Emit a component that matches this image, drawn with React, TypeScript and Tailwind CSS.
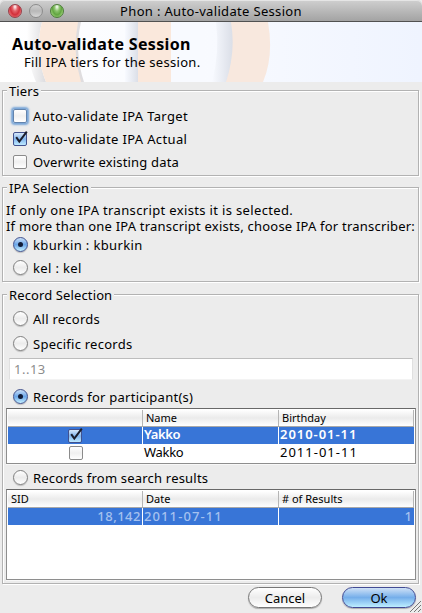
import type { ReactNode } from "react";

function Group({ title, className, children }: { title: string; className: string; children: ReactNode }) {
  return (
    <section
      className={`relative ml-[2px] w-[417px] border border-[#b2b2b2] shadow-[1px_1px_0_#fff,inset_1px_1px_0_#fff] ${className}`}
    >
      <h2 className="absolute -top-[8px] left-[4px] bg-[#ececec] px-[2px] text-[13px] leading-[16px] font-normal tracking-[0.12px]">{title}</h2>
      {children}
    </section>
  );
}

function Check({ checked = false, focused = false }: { checked?: boolean; focused?: boolean }) {
  return (
    <span
      className={`relative block size-[14px] shrink-0 rounded-[2px] border ${
        checked
          ? "border-[#42528e] bg-linear-to-b from-[#d7e8fa] via-[#82b5ed] to-[#bfeaff]"
          : "border-[#8b8b8b] bg-linear-to-b from-white via-[#f0f0f0] to-white"
      } ${focused ? "border-[#6384ad] shadow-[0_0_2px_2px_#79a6d8]" : ""}`}
    >
      {checked && (
        <svg className="absolute -top-[3px] -left-[1px]" width="16" height="16" viewBox="0 0 16 16">
          <path d="M3.2 7.2 L6.3 11.6 L13.8 1.6" fill="none" stroke="#1b1d2b" strokeWidth="2" />
        </svg>
      )}
    </span>
  );
}

function Radio({ checked = false }: { checked?: boolean }) {
  return (
    <span
      className={`flex size-[15px] shrink-0 items-center justify-center rounded-full border shadow-[0_1px_1px_#0003] ${
        checked
          ? "border-[#42528e] bg-linear-to-b from-[#c9dff7] via-[#6ba6e8] to-[#c5f0ff]"
          : "border-[#808080] bg-linear-to-b from-white via-[#ececec] to-white"
      }`}
    >
      {checked && <span className="size-[5px] rounded-full bg-[#111c38]" />}
    </span>
  );
}

function Option({ control, className, children }: { control: ReactNode; className: string; children: ReactNode }) {
  return (
    <label className={`flex items-center ${className}`}>
      <span className="flex w-[20px] shrink-0">{control}</span>
      <span>{children}</span>
    </label>
  );
}

function HeaderRow({ labels }: { labels: string[] }) {
  return (
    <div className="grid h-[17px] grid-cols-[135px_136px_135px] border-b border-[#a9a9a9] bg-linear-to-b from-white via-[#ebebeb] to-white text-[11px] leading-[15px]">
      {labels.map((label, i) => (
        <span key={i} className="border-r border-[#b5b5b5] pl-[3px]">{label}</span>
      ))}
    </div>
  );
}

export default function App() {
  return (
    <main className="flex h-[613px] w-[422px] flex-col overflow-hidden bg-[#ececec] font-['Noto_Sans','Open_Sans',sans-serif] text-[13px] leading-[16px] whitespace-nowrap text-black">
      <header className="relative flex h-[22px] shrink-0 items-center justify-center rounded-t-[5px] border-b border-[#515151] bg-linear-to-b from-[#d0d0d0] to-[#a3a3a3] shadow-[inset_0_1px_0_#e5e5e5]">
        <div className="absolute top-[4px] left-[8px] flex gap-[7px]">
          <i className="size-[14px] rounded-full border border-[#98404a] bg-[radial-gradient(ellipse_at_50%_15%,#fff_0%,#e4636a_30%,#d2303b_55%,#ff9a98_100%)]" />
          <i className="size-[14px] rounded-full border border-[#8c8c8c] bg-linear-to-b from-[#cfcfcf] via-[#b8b8b8] to-[#d8d8d8]" />
          <i className="size-[14px] rounded-full border border-[#4d7d3a] bg-[radial-gradient(ellipse_at_50%_15%,#fff_0%,#8cc46d_30%,#62a541_55%,#c8f5a0_100%)]" />
        </div>
        <h1 className="text-[13px] font-normal tracking-[0.33px]">Phon : Auto-validate Session</h1>
      </header>

      <div className="relative h-[60px] shrink-0 overflow-hidden bg-linear-to-r from-white via-[#f8faff] to-[#eff4ff]">
        <svg className="absolute inset-0" width="422" height="60" viewBox="0 0 422 60">
          <defs>
            <linearGradient id="shadeLeft">
              <stop offset="0" stopColor="#fff" />
              <stop offset="1" stopColor="#dcdcdf" />
            </linearGradient>
            <linearGradient id="shadeBar">
              <stop offset="0" stopColor="#f8faff" />
              <stop offset="1" stopColor="#d9dde6" />
            </linearGradient>
          </defs>
          <path d="M28 0H42Q34 30 46 60H36Q23 30 28 0Z" fill="url(#shadeLeft)" />
          <path d="M42 0H79Q72 30 82 60H46Q34 30 42 0Z" fill="#fae8db" />
          <path d="M78 0H81Q74 30 84 60H81Q72 30 78 0Z" fill="#dfdddf" />
          <path d="M125 0H139V60H125Z" fill="url(#shadeBar)" />
          <path d="M138 0H171V60H138Z" fill="#fae8dc" />
          <path d="M171 0H204V60H171Z" fill="#f8faff" />
          <path d="M216 0H233Q236 30 227 60H212Q220 30 216 0Z" fill="url(#shadeBar)" />
          <path d="M231 0H268Q274 34 263 60H226Q236 30 231 0Z" fill="#f8e8de" />
        </svg>
        <div className="relative pt-[12px]">
          <p className="pl-[12px] text-[16px] leading-[20px] font-bold tracking-[0.33px]">Auto-validate Session</p>
          <p className="pl-[24px] leading-[17px] tracking-[0.3px]">Fill IPA tiers for the session.</p>
        </div>
      </div>

      <Group title="Tiers" className="mt-[8px] h-[86px] pt-[13px] pl-[10px]">
        <Option className="h-[23px] tracking-[0.36px]" control={<Check focused />}>Auto-validate IPA Target</Option>
        <Option className="h-[23px] tracking-[0.36px]" control={<Check checked />}>Auto-validate IPA Actual</Option>
        <Option className="h-[23px] tracking-[0.17px]" control={<Check />}>Overwrite existing data</Option>
      </Group>

      <Group title="IPA Selection" className="mt-[11px] h-[95px] pt-[14px]">
        <p className="pl-[3px] tracking-[0.35px]">If only one IPA transcript exists it is selected.</p>
        <p className="pl-[3px] tracking-[0.21px]">If more than one IPA transcript exists, choose IPA for transcriber:</p>
        <Option className="-mt-px h-[23px] pl-[10px] tracking-[0.35px]" control={<Radio checked />}>kburkin : kburkin</Option>
        <Option className="h-[23px] pl-[10px] tracking-[0.35px]" control={<Radio />}>kel : kel</Option>
      </Group>

      <Group title="Record Selection" className="mt-[12px] h-[290px] pt-[11px] pl-[3px]">
        <Option className="h-[25px] pl-[7px] tracking-[0.25px]" control={<Radio />}>All records</Option>
        <Option className="h-[25px] pl-[7px] tracking-[0.25px]" control={<Radio />}>Specific records</Option>
        <div className="mt-[2px] ml-[3px] flex h-[22px] w-[404px] items-center border border-t-[#bdbdbd] border-r-[#e0e0e0] border-b-[#f3f3f3] border-l-[#e0e0e0] bg-white pl-[4px] tracking-[0.5px] text-[#8c8c8c]">
          1..13
        </div>
        <Option className="mt-[5px] h-[23px] pl-[7px] tracking-[0.25px]" control={<Radio checked />}>Records for participant(s)</Option>
        <div className="h-[56px] w-[410px] border border-[#8e8e8e] border-t-[#686868] bg-white px-px pt-px shadow-[0_1px_0_#f8f8f8]">
          <HeaderRow labels={["", "Name", "Birthday"]} />
          <div className="grid h-[17px] grid-cols-[135px_136px_135px] bg-[#3875d7] leading-[15px] font-semibold text-white">
            <span className="flex h-[17px] items-center justify-center border-r border-white"><Check checked /></span>
            <span className="h-[17px] border-r border-white pl-px tracking-[-0.4px]">Yakko</span>
            <span className="pl-px tracking-[0.95px]">2010-01-11</span>
          </div>
          <div className="grid h-[18px] grid-cols-[135px_136px_135px] leading-[17px]">
            <span className="flex items-center justify-center"><Check /></span>
            <span className="pl-px tracking-[-0.3px]">Wakko</span>
            <span className="pl-px tracking-[1px]">2011-01-11</span>
          </div>
        </div>
        <Option className="mt-[2px] h-[23px] pl-[7px] tracking-[0.2px]" control={<Radio />}>Records from search results</Option>
        <div className="h-[91px] w-[410px] border border-[#8e8e8e] border-t-[#686868] bg-white px-px pt-px shadow-[0_1px_0_#f8f8f8]">
          <HeaderRow labels={["SID", "Date", "# of Results"]} />
          <div className="grid h-[17px] grid-cols-[135px_136px_135px] bg-[#3875d7] leading-[16px] font-medium text-[#a5c1ef]">
            <span className="border-r border-white pr-px text-right tracking-[0.5px]">18,142</span>
            <span className="border-r border-white pl-px tracking-[1.1px]">2011-07-11</span>
            <span className="pr-[2px] text-right">1</span>
          </div>
        </div>
      </Group>

      <footer className="relative flex h-[29px] shrink-0 justify-end gap-[20px] pt-[3px] pr-[6px]">
        <button className="h-[21px] w-[74px] rounded-full border border-[#777] bg-linear-to-b from-white via-[#ececec] to-white leading-[18px] shadow-[0_1px_1px_#0004]">Cancel</button>
        <button className="h-[21px] w-[74px] rounded-full border border-[#424b94] bg-linear-to-b from-[#cfe1f6] via-[#75aeea] to-[#bdeeff] leading-[18px] shadow-[0_1px_1px_#0004]">Ok</button>
        <svg className="absolute right-[1px] bottom-[1px]" width="11" height="11" viewBox="0 0 11 11">
          <path d="M0 11 11 0M4 11 11 4M8 11 11 8" stroke="#777" strokeWidth="1" />
        </svg>
      </footer>
    </main>
  );
}
